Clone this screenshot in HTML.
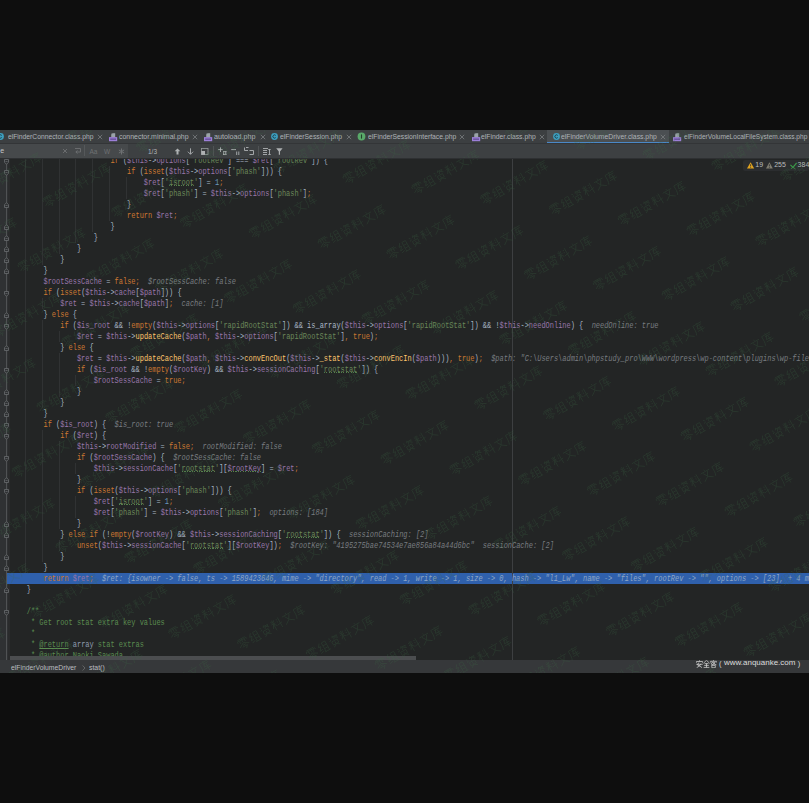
<!DOCTYPE html><html><head><meta charset="utf-8"><style>

*{margin:0;padding:0;box-sizing:border-box}
html,body{width:809px;height:803px;overflow:hidden;background:#0e0e0e}
.abs{position:absolute}
#ide{position:absolute;left:0;top:130px;width:809px;height:543px;overflow:hidden}
#tabs{position:absolute;left:0;top:130px;width:809px;height:13.5px;background:#3c3f41}
#search{position:absolute;left:0;top:143.5px;width:809px;height:14.5px;background:#3c3f41}
#editor{position:absolute;left:0;top:158px;width:809px;height:502px;background:#232525;overflow:hidden}
#gutter{position:absolute;left:0;top:0;width:7.5px;height:502px;background:#2f3133}
#gutter2{position:absolute;left:7.5px;top:0;width:2.5px;height:502px;background:#2a2b2c}
#foldline{position:absolute;left:6px;top:0;width:1px;height:502px;background:#505254}
.ln{position:absolute;left:9.7px;white-space:pre;font-family:"Liberation Mono",monospace;font-size:8.2px;line-height:11px;height:11px;color:#a9b7c6;transform:scaleX(0.85122);transform-origin:0 0}
.typo{background:repeating-linear-gradient(90deg,#55804c 0 1px,transparent 1px 2px) 0 6.9px/100% 1px no-repeat}
.hint{color:#787c80;font-style:italic}
.doc{color:#5b8c50;font-style:normal}
#hscroll{position:absolute;left:10px;top:656px;width:799px;height:4px;background:#232525}
#hthumb{position:absolute;left:10px;top:656px;width:406px;height:4px;background:#4b4d4f}
#crumb{position:absolute;left:0;top:660px;width:809px;height:13px;background:#36383a}
.g{position:absolute;width:1px;background:#303233}

</style></head><body>
<div style="position:absolute;left:0;top:130px;width:809px;height:13px;background:#3c3f41"></div>
<div style="position:absolute;left:547px;top:130px;width:122px;height:13px;background:#4b4f52"></div>
<div style="position:absolute;left:547px;top:141.5px;width:122px;height:2px;background:#4a88c7"></div>
<svg style="position:absolute;left:-4.2px;top:132.2px" width="9" height="9" viewBox="0 0 9 9"><circle cx="4.5" cy="4.5" r="3.4" fill="#3d9fbf"/><path d="M5.7 3.4 A1.6 1.6 0 1 0 5.7 5.6" stroke="#1d3b47" stroke-width="1" fill="none"/></svg>
<div style="position:absolute;left:7.5px;top:132.86px;white-space:pre;font-family:'Liberation Sans',sans-serif;font-size:7px;line-height:7.819px;color:#aeb3b7;font-weight:normal;transform:scaleX(0.9626);transform-origin:0 0;">elFinderConnector.class.php</div>
<svg style="position:absolute;left:96.5px;top:133.8px" width="6" height="6" viewBox="0 0 6 6"><path d="M0.8 0.8 L5.2 5.2 M5.2 0.8 L0.8 5.2" stroke="#7a7d80" stroke-width="0.8"/></svg>
<svg style="position:absolute;left:108.9px;top:132.8px" width="9" height="9" viewBox="0 0 9 9"><path d="M2.2 0.2 H6.2 V4.2 H2.2 Z" fill="#9aa3a8"/><path d="M2.2 0.2 L3.6 0.2 L2.2 1.6 Z" fill="#3c3f41"/><rect x="0" y="4.1" width="8.2" height="4.1" fill="#9c7fd8"/><rect x="1.2" y="5.4" width="5.8" height="1.6" fill="#6d55a0"/></svg>
<div style="position:absolute;left:118.60000000000001px;top:132.86px;white-space:pre;font-family:'Liberation Sans',sans-serif;font-size:7px;line-height:7.819px;color:#aeb3b7;font-weight:normal;transform:scaleX(0.9937);transform-origin:0 0;">connector.minimal.php</div>
<svg style="position:absolute;left:191.5px;top:133.8px" width="6" height="6" viewBox="0 0 6 6"><path d="M0.8 0.8 L5.2 5.2 M5.2 0.8 L0.8 5.2" stroke="#7a7d80" stroke-width="0.8"/></svg>
<svg style="position:absolute;left:204px;top:132.8px" width="9" height="9" viewBox="0 0 9 9"><path d="M2.2 0.2 H6.2 V4.2 H2.2 Z" fill="#9aa3a8"/><path d="M2.2 0.2 L3.6 0.2 L2.2 1.6 Z" fill="#3c3f41"/><rect x="0" y="4.1" width="8.2" height="4.1" fill="#9c7fd8"/><rect x="1.2" y="5.4" width="5.8" height="1.6" fill="#6d55a0"/></svg>
<div style="position:absolute;left:213.7px;top:132.86px;white-space:pre;font-family:'Liberation Sans',sans-serif;font-size:7px;line-height:7.819px;color:#aeb3b7;font-weight:normal;transform:scaleX(1.0277);transform-origin:0 0;">autoload.php</div>
<svg style="position:absolute;left:259.5px;top:133.8px" width="6" height="6" viewBox="0 0 6 6"><path d="M0.8 0.8 L5.2 5.2 M5.2 0.8 L0.8 5.2" stroke="#7a7d80" stroke-width="0.8"/></svg>
<svg style="position:absolute;left:270.2px;top:132.2px" width="9" height="9" viewBox="0 0 9 9"><circle cx="4.5" cy="4.5" r="3.4" fill="#3d9fbf"/><path d="M5.7 3.4 A1.6 1.6 0 1 0 5.7 5.6" stroke="#1d3b47" stroke-width="1" fill="none"/></svg>
<div style="position:absolute;left:280.2px;top:132.86px;white-space:pre;font-family:'Liberation Sans',sans-serif;font-size:7px;line-height:7.819px;color:#aeb3b7;font-weight:normal;transform:scaleX(0.9715);transform-origin:0 0;">elFinderSession.php</div>
<svg style="position:absolute;left:345.5px;top:133.8px" width="6" height="6" viewBox="0 0 6 6"><path d="M0.8 0.8 L5.2 5.2 M5.2 0.8 L0.8 5.2" stroke="#7a7d80" stroke-width="0.8"/></svg>
<svg style="position:absolute;left:357.2px;top:132.2px" width="9" height="9" viewBox="0 0 9 9"><circle cx="4.5" cy="4.5" r="3.9" fill="#59a869"/><path d="M4.5 2.4 V6.6" stroke="#23402a" stroke-width="1.1"/></svg>
<div style="position:absolute;left:367.7px;top:132.86px;white-space:pre;font-family:'Liberation Sans',sans-serif;font-size:7px;line-height:7.819px;color:#aeb3b7;font-weight:normal;transform:scaleX(0.9687);transform-origin:0 0;">elFinderSessionInterface.php</div>
<svg style="position:absolute;left:458.5px;top:133.8px" width="6" height="6" viewBox="0 0 6 6"><path d="M0.8 0.8 L5.2 5.2 M5.2 0.8 L0.8 5.2" stroke="#7a7d80" stroke-width="0.8"/></svg>
<svg style="position:absolute;left:471.8px;top:132.8px" width="9" height="9" viewBox="0 0 9 9"><path d="M2.2 0.2 H6.2 V4.2 H2.2 Z" fill="#9aa3a8"/><path d="M2.2 0.2 L3.6 0.2 L2.2 1.6 Z" fill="#3c3f41"/><rect x="0" y="4.1" width="8.2" height="4.1" fill="#9c7fd8"/><rect x="1.2" y="5.4" width="5.8" height="1.6" fill="#6d55a0"/></svg>
<div style="position:absolute;left:481.3px;top:132.86px;white-space:pre;font-family:'Liberation Sans',sans-serif;font-size:7px;line-height:7.819px;color:#aeb3b7;font-weight:normal;transform:scaleX(0.9695);transform-origin:0 0;">elFinder.class.php</div>
<svg style="position:absolute;left:538.5px;top:133.8px" width="6" height="6" viewBox="0 0 6 6"><path d="M0.8 0.8 L5.2 5.2 M5.2 0.8 L0.8 5.2" stroke="#7a7d80" stroke-width="0.8"/></svg>
<svg style="position:absolute;left:551.6px;top:132.2px" width="9" height="9" viewBox="0 0 9 9"><circle cx="4.5" cy="4.5" r="3.4" fill="#3d9fbf"/><path d="M5.7 3.4 A1.6 1.6 0 1 0 5.7 5.6" stroke="#1d3b47" stroke-width="1" fill="none"/></svg>
<div style="position:absolute;left:561.4000000000001px;top:132.86px;white-space:pre;font-family:'Liberation Sans',sans-serif;font-size:7px;line-height:7.819px;color:#aeb3b7;font-weight:normal;transform:scaleX(0.9723);transform-origin:0 0;">elFinderVolumeDriver.class.php</div>
<svg style="position:absolute;left:659.5px;top:133.8px" width="6" height="6" viewBox="0 0 6 6"><path d="M0.8 0.8 L5.2 5.2 M5.2 0.8 L0.8 5.2" stroke="#7a7d80" stroke-width="0.8"/></svg>
<svg style="position:absolute;left:673px;top:132.8px" width="9" height="9" viewBox="0 0 9 9"><path d="M2.2 0.2 H6.2 V4.2 H2.2 Z" fill="#9aa3a8"/><path d="M2.2 0.2 L3.6 0.2 L2.2 1.6 Z" fill="#3c3f41"/><rect x="0" y="4.1" width="8.2" height="4.1" fill="#9c7fd8"/><rect x="1.2" y="5.4" width="5.8" height="1.6" fill="#6d55a0"/></svg>
<div style="position:absolute;left:683.7px;top:132.86px;white-space:pre;font-family:'Liberation Sans',sans-serif;font-size:7px;line-height:7.819px;color:#aeb3b7;font-weight:normal;transform:scaleX(0.9376);transform-origin:0 0;">elFinderVolumeLocalFileSystem.class.php</div>
<div style="position:absolute;left:0;top:143px;width:809px;height:15px;background:#3d4042"></div>
<div style="position:absolute;left:0;top:157.5px;width:809px;height:1px;background:#2e3032;z-index:1"></div>
<div style="position:absolute;left:0;top:143px;width:128px;height:15px;background:#46494b"></div>
<div style="position:absolute;left:0;top:142.7px;width:809px;height:1px;background:#333537"></div>
<div style="position:absolute;left:84px;top:145px;width:1px;height:11px;background:#55585a"></div>
<div style="position:absolute;left:0.3px;top:146.86px;white-space:pre;font-family:'Liberation Sans',sans-serif;font-size:7px;line-height:7.819px;color:#c4c6c8;font-weight:normal;">e</div>
<svg style="position:absolute;left:62px;top:147.5px" width="6" height="6"><path d="M1 1 L5 5 M5 1 L1 5" stroke="#6e7173" stroke-width="0.9"/></svg>
<svg style="position:absolute;left:74px;top:147px" width="8" height="7"><path d="M1 1.5 H6.5 V5 H2 M3.5 3.5 L1.8 5 L3.5 6.5" stroke="#6e7173" stroke-width="0.9" fill="none"/></svg>
<div style="position:absolute;left:89.5px;top:148.32px;white-space:pre;font-family:'Liberation Sans',sans-serif;font-size:6.5px;line-height:7.261px;color:#6e7173;font-weight:normal;">Aa</div>
<div style="position:absolute;left:104px;top:148.32px;white-space:pre;font-family:'Liberation Sans',sans-serif;font-size:6.5px;line-height:7.261px;color:#6e7173;font-weight:normal;">W</div>
<svg style="position:absolute;left:117.5px;top:147.5px" width="7" height="7"><path d="M3.5 0.5 V6.5 M0.9 2 L6.1 5 M6.1 2 L0.9 5" stroke="#6e7173" stroke-width="1"/></svg>
<div style="position:absolute;left:148px;top:148.12px;white-space:pre;font-family:'Liberation Sans',sans-serif;font-size:6.5px;line-height:7.261px;color:#b0b3b5;font-weight:normal;">1/3</div>
<svg style="position:absolute;left:174px;top:147.5px" width="7" height="7"><path d="M3.5 0.5 L6.3 3.3 H4.5 V6.5 H2.5 V3.3 H0.7 Z" fill="#aeb1b3"/></svg>
<svg style="position:absolute;left:187px;top:147.5px" width="7" height="7"><path d="M3.5 0.3 V6.2 M0.9 3.7 L3.5 6.3 L6.1 3.7" stroke="#aeb1b3" stroke-width="0.9" fill="none"/></svg>
<svg style="position:absolute;left:200.5px;top:147.5px" width="8" height="7"><rect x="0.5" y="0.5" width="6.5" height="6" stroke="#aeb1b3" stroke-width="0.8" fill="none" opacity="0.8"/><rect x="0.3" y="3" width="3.7" height="3.8" fill="#aeb1b3"/></svg>
<div style="position:absolute;left:212.5px;top:145.5px;width:1px;height:10px;background:#505355"></div>
<svg style="position:absolute;left:218px;top:147px" width="9" height="8"><path d="M2.5 0.3 V5 M0.2 2.6 H4.8 M5 4.5 H8.5 M5.7 4.5 V8 M7.8 4.5 V8 M5 7.6 H8.5" stroke="#aeb1b3" stroke-width="0.9" fill="none"/></svg>
<svg style="position:absolute;left:231px;top:147px" width="9" height="8"><path d="M0.2 2.6 H5 M5.7 4.5 V8 M7.8 4.5 V8" stroke="#aeb1b3" stroke-width="0.9" fill="none"/></svg>
<svg style="position:absolute;left:243.5px;top:147px" width="10" height="8"><path d="M0.5 0.5 V3.5 H4 M4.5 0.5 H2 M5.5 3.5 H9.5 V7.5 H5.5" stroke="#aeb1b3" stroke-width="0.9" fill="none"/></svg>
<div style="position:absolute;left:257.8px;top:145.5px;width:1px;height:10px;background:#505355"></div>
<svg style="position:absolute;left:262.5px;top:147.5px" width="8" height="7"><path d="M0 0.5 H5 M0 2.5 H4 M0 4.5 H4 M0 6.5 H4 M6.5 1.5 V6.5 M5.3 1.5 H7.7 M5.3 6.5 H7.7" stroke="#aeb1b3" stroke-width="0.9" fill="none"/></svg>
<svg style="position:absolute;left:276px;top:147.5px" width="7" height="7"><path d="M0.2 0.3 H6.6 L4 3.4 V6.8 H2.8 V3.4 Z" fill="#aeb1b3"/></svg>
<div id="editor"><div id="gutter"></div><div id="gutter2"></div><div id="foldline"></div>
<div class="g" style="left:25px;top:0.0px;height:425.5px"></div>
<div class="g" style="left:42px;top:0.0px;height:106.5px"></div>
<div class="g" style="left:59px;top:0.0px;height:95.5px"></div>
<div class="g" style="left:75px;top:0.0px;height:84.5px"></div>
<div class="g" style="left:92px;top:0.0px;height:73.5px"></div>
<div class="g" style="left:109px;top:7.5px;height:55.0px"></div>
<div class="g" style="left:126px;top:18.5px;height:22.0px"></div>
<div class="g" style="left:42px;top:139.5px;height:11.0px"></div>
<div class="g" style="left:42px;top:161.5px;height:88.0px"></div>
<div class="g" style="left:59px;top:172.5px;height:11.0px"></div>
<div class="g" style="left:59px;top:194.5px;height:44.0px"></div>
<div class="g" style="left:75px;top:216.5px;height:11.0px"></div>
<div class="g" style="left:42px;top:271.5px;height:132.0px"></div>
<div class="g" style="left:59px;top:282.5px;height:88.0px"></div>
<div class="g" style="left:75px;top:304.5px;height:11.0px"></div>
<div class="g" style="left:75px;top:337.5px;height:22.0px"></div>
<div class="g" style="left:59px;top:381.5px;height:11.0px"></div>
<div class="abs" style="left:7px;top:414.5px;width:802px;height:11px;background:#2f60ac"></div>
<div class="abs" style="left:512px;top:0;width:1px;height:502px;background:#3d3f41"></div>
<svg style="position:absolute;left:4px;top:0.7px" width="5" height="6" viewBox="0 0 5 6"><path d="M0.5 0.5 H4.5 V3.3 L2.5 5.3 L0.5 3.3 Z" fill="#2f3133" stroke="#6a6d70" stroke-width="0.8"/><path d="M1.5 2.5 H3.5" stroke="#6a6d70" stroke-width="0.7"/></svg>
<svg style="position:absolute;left:4px;top:11.7px" width="5" height="6" viewBox="0 0 5 6"><path d="M0.5 0.5 H4.5 V3.3 L2.5 5.3 L0.5 3.3 Z" fill="#2f3133" stroke="#6a6d70" stroke-width="0.8"/><path d="M1.5 2.5 H3.5" stroke="#6a6d70" stroke-width="0.7"/></svg>
<svg style="position:absolute;left:4px;top:132.7px" width="5" height="6" viewBox="0 0 5 6"><path d="M0.5 0.5 H4.5 V3.3 L2.5 5.3 L0.5 3.3 Z" fill="#2f3133" stroke="#6a6d70" stroke-width="0.8"/><path d="M1.5 2.5 H3.5" stroke="#6a6d70" stroke-width="0.7"/></svg>
<svg style="position:absolute;left:4px;top:165.7px" width="5" height="6" viewBox="0 0 5 6"><path d="M0.5 0.5 H4.5 V3.3 L2.5 5.3 L0.5 3.3 Z" fill="#2f3133" stroke="#6a6d70" stroke-width="0.8"/><path d="M1.5 2.5 H3.5" stroke="#6a6d70" stroke-width="0.7"/></svg>
<svg style="position:absolute;left:4px;top:209.7px" width="5" height="6" viewBox="0 0 5 6"><path d="M0.5 0.5 H4.5 V3.3 L2.5 5.3 L0.5 3.3 Z" fill="#2f3133" stroke="#6a6d70" stroke-width="0.8"/><path d="M1.5 2.5 H3.5" stroke="#6a6d70" stroke-width="0.7"/></svg>
<svg style="position:absolute;left:4px;top:264.7px" width="5" height="6" viewBox="0 0 5 6"><path d="M0.5 0.5 H4.5 V3.3 L2.5 5.3 L0.5 3.3 Z" fill="#2f3133" stroke="#6a6d70" stroke-width="0.8"/><path d="M1.5 2.5 H3.5" stroke="#6a6d70" stroke-width="0.7"/></svg>
<svg style="position:absolute;left:4px;top:275.7px" width="5" height="6" viewBox="0 0 5 6"><path d="M0.5 0.5 H4.5 V3.3 L2.5 5.3 L0.5 3.3 Z" fill="#2f3133" stroke="#6a6d70" stroke-width="0.8"/><path d="M1.5 2.5 H3.5" stroke="#6a6d70" stroke-width="0.7"/></svg>
<svg style="position:absolute;left:4px;top:297.7px" width="5" height="6" viewBox="0 0 5 6"><path d="M0.5 0.5 H4.5 V3.3 L2.5 5.3 L0.5 3.3 Z" fill="#2f3133" stroke="#6a6d70" stroke-width="0.8"/><path d="M1.5 2.5 H3.5" stroke="#6a6d70" stroke-width="0.7"/></svg>
<svg style="position:absolute;left:4px;top:330.7px" width="5" height="6" viewBox="0 0 5 6"><path d="M0.5 0.5 H4.5 V3.3 L2.5 5.3 L0.5 3.3 Z" fill="#2f3133" stroke="#6a6d70" stroke-width="0.8"/><path d="M1.5 2.5 H3.5" stroke="#6a6d70" stroke-width="0.7"/></svg>
<svg style="position:absolute;left:4px;top:451.7px" width="5" height="6" viewBox="0 0 5 6"><path d="M0.5 0.5 H4.5 V3.3 L2.5 5.3 L0.5 3.3 Z" fill="#2f3133" stroke="#6a6d70" stroke-width="0.8"/><path d="M1.5 2.5 H3.5" stroke="#6a6d70" stroke-width="0.7"/></svg>
<svg style="position:absolute;left:4px;top:43.5px" width="5" height="6" viewBox="0 0 5 6"><path d="M0.5 5.5 H4.5 V2.7 L2.5 0.7 L0.5 2.7 Z" fill="#2f3133" stroke="#6a6d70" stroke-width="0.8"/><path d="M1.5 3.5 H3.5" stroke="#6a6d70" stroke-width="0.7"/></svg>
<svg style="position:absolute;left:4px;top:65.5px" width="5" height="6" viewBox="0 0 5 6"><path d="M0.5 5.5 H4.5 V2.7 L2.5 0.7 L0.5 2.7 Z" fill="#2f3133" stroke="#6a6d70" stroke-width="0.8"/><path d="M1.5 3.5 H3.5" stroke="#6a6d70" stroke-width="0.7"/></svg>
<svg style="position:absolute;left:4px;top:76.5px" width="5" height="6" viewBox="0 0 5 6"><path d="M0.5 5.5 H4.5 V2.7 L2.5 0.7 L0.5 2.7 Z" fill="#2f3133" stroke="#6a6d70" stroke-width="0.8"/><path d="M1.5 3.5 H3.5" stroke="#6a6d70" stroke-width="0.7"/></svg>
<svg style="position:absolute;left:4px;top:87.5px" width="5" height="6" viewBox="0 0 5 6"><path d="M0.5 5.5 H4.5 V2.7 L2.5 0.7 L0.5 2.7 Z" fill="#2f3133" stroke="#6a6d70" stroke-width="0.8"/><path d="M1.5 3.5 H3.5" stroke="#6a6d70" stroke-width="0.7"/></svg>
<svg style="position:absolute;left:4px;top:98.5px" width="5" height="6" viewBox="0 0 5 6"><path d="M0.5 5.5 H4.5 V2.7 L2.5 0.7 L0.5 2.7 Z" fill="#2f3133" stroke="#6a6d70" stroke-width="0.8"/><path d="M1.5 3.5 H3.5" stroke="#6a6d70" stroke-width="0.7"/></svg>
<svg style="position:absolute;left:4px;top:109.5px" width="5" height="6" viewBox="0 0 5 6"><path d="M0.5 5.5 H4.5 V2.7 L2.5 0.7 L0.5 2.7 Z" fill="#2f3133" stroke="#6a6d70" stroke-width="0.8"/><path d="M1.5 3.5 H3.5" stroke="#6a6d70" stroke-width="0.7"/></svg>
<svg style="position:absolute;left:4px;top:153.5px" width="5" height="6" viewBox="0 0 5 6"><path d="M0.5 5.5 H4.5 V2.7 L2.5 0.7 L0.5 2.7 Z" fill="#2f3133" stroke="#6a6d70" stroke-width="0.8"/><path d="M1.5 3.5 H3.5" stroke="#6a6d70" stroke-width="0.7"/></svg>
<svg style="position:absolute;left:4px;top:186.5px" width="5" height="6" viewBox="0 0 5 6"><path d="M0.5 5.5 H4.5 V2.7 L2.5 0.7 L0.5 2.7 Z" fill="#2f3133" stroke="#6a6d70" stroke-width="0.8"/><path d="M1.5 3.5 H3.5" stroke="#6a6d70" stroke-width="0.7"/></svg>
<svg style="position:absolute;left:4px;top:230.5px" width="5" height="6" viewBox="0 0 5 6"><path d="M0.5 5.5 H4.5 V2.7 L2.5 0.7 L0.5 2.7 Z" fill="#2f3133" stroke="#6a6d70" stroke-width="0.8"/><path d="M1.5 3.5 H3.5" stroke="#6a6d70" stroke-width="0.7"/></svg>
<svg style="position:absolute;left:4px;top:241.5px" width="5" height="6" viewBox="0 0 5 6"><path d="M0.5 5.5 H4.5 V2.7 L2.5 0.7 L0.5 2.7 Z" fill="#2f3133" stroke="#6a6d70" stroke-width="0.8"/><path d="M1.5 3.5 H3.5" stroke="#6a6d70" stroke-width="0.7"/></svg>
<svg style="position:absolute;left:4px;top:252.5px" width="5" height="6" viewBox="0 0 5 6"><path d="M0.5 5.5 H4.5 V2.7 L2.5 0.7 L0.5 2.7 Z" fill="#2f3133" stroke="#6a6d70" stroke-width="0.8"/><path d="M1.5 3.5 H3.5" stroke="#6a6d70" stroke-width="0.7"/></svg>
<svg style="position:absolute;left:4px;top:318.5px" width="5" height="6" viewBox="0 0 5 6"><path d="M0.5 5.5 H4.5 V2.7 L2.5 0.7 L0.5 2.7 Z" fill="#2f3133" stroke="#6a6d70" stroke-width="0.8"/><path d="M1.5 3.5 H3.5" stroke="#6a6d70" stroke-width="0.7"/></svg>
<svg style="position:absolute;left:4px;top:362.5px" width="5" height="6" viewBox="0 0 5 6"><path d="M0.5 5.5 H4.5 V2.7 L2.5 0.7 L0.5 2.7 Z" fill="#2f3133" stroke="#6a6d70" stroke-width="0.8"/><path d="M1.5 3.5 H3.5" stroke="#6a6d70" stroke-width="0.7"/></svg>
<svg style="position:absolute;left:4px;top:373.5px" width="5" height="6" viewBox="0 0 5 6"><path d="M0.5 5.5 H4.5 V2.7 L2.5 0.7 L0.5 2.7 Z" fill="#2f3133" stroke="#6a6d70" stroke-width="0.8"/><path d="M1.5 3.5 H3.5" stroke="#6a6d70" stroke-width="0.7"/></svg>
<svg style="position:absolute;left:4px;top:395.5px" width="5" height="6" viewBox="0 0 5 6"><path d="M0.5 5.5 H4.5 V2.7 L2.5 0.7 L0.5 2.7 Z" fill="#2f3133" stroke="#6a6d70" stroke-width="0.8"/><path d="M1.5 3.5 H3.5" stroke="#6a6d70" stroke-width="0.7"/></svg>
<svg style="position:absolute;left:4px;top:406.5px" width="5" height="6" viewBox="0 0 5 6"><path d="M0.5 5.5 H4.5 V2.7 L2.5 0.7 L0.5 2.7 Z" fill="#2f3133" stroke="#6a6d70" stroke-width="0.8"/><path d="M1.5 3.5 H3.5" stroke="#6a6d70" stroke-width="0.7"/></svg>
<svg style="position:absolute;left:4px;top:428.5px" width="5" height="6" viewBox="0 0 5 6"><path d="M0.5 5.5 H4.5 V2.7 L2.5 0.7 L0.5 2.7 Z" fill="#2f3133" stroke="#6a6d70" stroke-width="0.8"/><path d="M1.5 3.5 H3.5" stroke="#6a6d70" stroke-width="0.7"/></svg>
</div>
<div style="position:absolute;left:0;top:158px;width:809px;height:498px;overflow:hidden"><div style="position:absolute;left:0;top:-158px">
<div class="ln" style="top:155.2px">                        <span style="color:#cc7832">if</span> <span style="color:#a9b7c6">(</span><span style="color:#9876aa">$this</span><span style="color:#a9b7c6">-&gt;</span><span style="color:#9876aa">options</span><span style="color:#a9b7c6">[</span><span style="color:#6a8759">&#x27;rootRev&#x27;</span><span style="color:#a9b7c6">]</span> <span style="color:#a9b7c6">=</span><span style="color:#a9b7c6">=</span><span style="color:#a9b7c6">=</span> <span style="color:#9876aa">$ret</span><span style="color:#a9b7c6">[</span><span style="color:#6a8759">&#x27;rootRev&#x27;</span><span style="color:#a9b7c6">]</span><span style="color:#a9b7c6">)</span> <span style="color:#a9b7c6">{</span></div>
<div class="ln" style="top:166.2px">                            <span style="color:#cc7832">if</span> <span style="color:#a9b7c6">(</span><span style="color:#cc7832">isset</span><span style="color:#a9b7c6">(</span><span style="color:#9876aa">$this</span><span style="color:#a9b7c6">-&gt;</span><span style="color:#9876aa">options</span><span style="color:#a9b7c6">[</span><span style="color:#6a8759">&#x27;phash&#x27;</span><span style="color:#a9b7c6">]</span><span style="color:#a9b7c6">)</span><span style="color:#a9b7c6">)</span> <span style="color:#a9b7c6">{</span></div>
<div class="ln" style="top:177.2px">                                <span style="color:#9876aa">$ret</span><span style="color:#a9b7c6">[</span><span style="color:#6a8759">'<span class="typo">isroot</span>'</span><span style="color:#a9b7c6">]</span> <span style="color:#a9b7c6">=</span> <span style="color:#6897bb">1</span><span style="color:#cc7832">;</span></div>
<div class="ln" style="top:188.2px">                                <span style="color:#9876aa">$ret</span><span style="color:#a9b7c6">[</span><span style="color:#6a8759">&#x27;phash&#x27;</span><span style="color:#a9b7c6">]</span> <span style="color:#a9b7c6">=</span> <span style="color:#9876aa">$this</span><span style="color:#a9b7c6">-&gt;</span><span style="color:#9876aa">options</span><span style="color:#a9b7c6">[</span><span style="color:#6a8759">&#x27;phash&#x27;</span><span style="color:#a9b7c6">]</span><span style="color:#cc7832">;</span></div>
<div class="ln" style="top:199.2px">                            <span style="color:#a9b7c6">}</span></div>
<div class="ln" style="top:210.2px">                            <span style="color:#cc7832">return</span> <span style="color:#9876aa">$ret</span><span style="color:#cc7832">;</span></div>
<div class="ln" style="top:221.2px">                        <span style="color:#a9b7c6">}</span></div>
<div class="ln" style="top:232.2px">                    <span style="color:#a9b7c6">}</span></div>
<div class="ln" style="top:243.2px">                <span style="color:#a9b7c6">}</span></div>
<div class="ln" style="top:254.2px">            <span style="color:#a9b7c6">}</span></div>
<div class="ln" style="top:265.2px">        <span style="color:#a9b7c6">}</span></div>
<div class="ln" style="top:276.2px">        <span style="color:#9876aa">$rootSessCache</span> <span style="color:#a9b7c6">=</span> <span style="color:#cc7832">false</span><span style="color:#cc7832">;</span>  <span class="hint">$rootSessCache: false</span></div>
<div class="ln" style="top:287.2px">        <span style="color:#cc7832">if</span> <span style="color:#a9b7c6">(</span><span style="color:#cc7832">isset</span><span style="color:#a9b7c6">(</span><span style="color:#9876aa">$this</span><span style="color:#a9b7c6">-&gt;</span><span style="color:#9876aa">cache</span><span style="color:#a9b7c6">[</span><span style="color:#9876aa">$path</span><span style="color:#a9b7c6">]</span><span style="color:#a9b7c6">)</span><span style="color:#a9b7c6">)</span> <span style="color:#a9b7c6">{</span></div>
<div class="ln" style="top:298.2px">            <span style="color:#9876aa">$ret</span> <span style="color:#a9b7c6">=</span> <span style="color:#9876aa">$this</span><span style="color:#a9b7c6">-&gt;</span><span style="color:#9876aa">cache</span><span style="color:#a9b7c6">[</span><span style="color:#9876aa">$path</span><span style="color:#a9b7c6">]</span><span style="color:#cc7832">;</span>  <span class="hint">cache: [1]</span></div>
<div class="ln" style="top:309.2px">        <span style="color:#a9b7c6">}</span> <span style="color:#cc7832">else</span> <span style="color:#a9b7c6">{</span></div>
<div class="ln" style="top:320.2px">            <span style="color:#cc7832">if</span> <span style="color:#a9b7c6">(</span><span style="color:#9876aa">$is_root</span> <span style="color:#a9b7c6">&amp;</span><span style="color:#a9b7c6">&amp;</span> <span style="color:#a9b7c6">!</span><span style="color:#cc7832">empty</span><span style="color:#a9b7c6">(</span><span style="color:#9876aa">$this</span><span style="color:#a9b7c6">-&gt;</span><span style="color:#9876aa">options</span><span style="color:#a9b7c6">[</span><span style="color:#6a8759">&#x27;rapidRootStat&#x27;</span><span style="color:#a9b7c6">]</span><span style="color:#a9b7c6">)</span> <span style="color:#a9b7c6">&amp;</span><span style="color:#a9b7c6">&amp;</span> <span style="color:#a9b7c6">is_array</span><span style="color:#a9b7c6">(</span><span style="color:#9876aa">$this</span><span style="color:#a9b7c6">-&gt;</span><span style="color:#9876aa">options</span><span style="color:#a9b7c6">[</span><span style="color:#6a8759">&#x27;rapidRootStat&#x27;</span><span style="color:#a9b7c6">]</span><span style="color:#a9b7c6">)</span> <span style="color:#a9b7c6">&amp;</span><span style="color:#a9b7c6">&amp;</span> <span style="color:#a9b7c6">!</span><span style="color:#9876aa">$this</span><span style="color:#a9b7c6">-&gt;</span><span style="color:#9876aa">needOnline</span><span style="color:#a9b7c6">)</span> <span style="color:#a9b7c6">{</span>  <span class="hint">needOnline: true</span></div>
<div class="ln" style="top:331.2px">                <span style="color:#9876aa">$ret</span> <span style="color:#a9b7c6">=</span> <span style="color:#9876aa">$this</span><span style="color:#a9b7c6">-&gt;</span><span style="color:#ffc66d">updateCache</span><span style="color:#a9b7c6">(</span><span style="color:#9876aa">$path</span><span style="color:#cc7832">,</span> <span style="color:#9876aa">$this</span><span style="color:#a9b7c6">-&gt;</span><span style="color:#9876aa">options</span><span style="color:#a9b7c6">[</span><span style="color:#6a8759">&#x27;rapidRootStat&#x27;</span><span style="color:#a9b7c6">]</span><span style="color:#cc7832">,</span> <span style="color:#cc7832">true</span><span style="color:#a9b7c6">)</span><span style="color:#cc7832">;</span></div>
<div class="ln" style="top:342.2px">            <span style="color:#a9b7c6">}</span> <span style="color:#cc7832">else</span> <span style="color:#a9b7c6">{</span></div>
<div class="ln" style="top:353.2px">                <span style="color:#9876aa">$ret</span> <span style="color:#a9b7c6">=</span> <span style="color:#9876aa">$this</span><span style="color:#a9b7c6">-&gt;</span><span style="color:#ffc66d">updateCache</span><span style="color:#a9b7c6">(</span><span style="color:#9876aa">$path</span><span style="color:#cc7832">,</span> <span style="color:#9876aa">$this</span><span style="color:#a9b7c6">-&gt;</span><span style="color:#ffc66d">convEncOut</span><span style="color:#a9b7c6">(</span><span style="color:#9876aa">$this</span><span style="color:#a9b7c6">-&gt;</span><span style="color:#ffc66d">_stat</span><span style="color:#a9b7c6">(</span><span style="color:#9876aa">$this</span><span style="color:#a9b7c6">-&gt;</span><span style="color:#ffc66d">convEncIn</span><span style="color:#a9b7c6">(</span><span style="color:#9876aa">$path</span><span style="color:#a9b7c6">)</span><span style="color:#a9b7c6">)</span><span style="color:#a9b7c6">)</span><span style="color:#cc7832">,</span> <span style="color:#cc7832">true</span><span style="color:#a9b7c6">)</span><span style="color:#cc7832">;</span>  <span class="hint">$path: &quot;C:\Users\admin\phpstudy_pro\WWW\wordpress\wp-content\plugins\wp-file-manager\lib\files&quot;</span></div>
<div class="ln" style="top:364.2px">                <span style="color:#cc7832">if</span> <span style="color:#a9b7c6">(</span><span style="color:#9876aa">$is_root</span> <span style="color:#a9b7c6">&amp;</span><span style="color:#a9b7c6">&amp;</span> <span style="color:#a9b7c6">!</span><span style="color:#cc7832">empty</span><span style="color:#a9b7c6">(</span><span style="color:#9876aa">$rootKey</span><span style="color:#a9b7c6">)</span> <span style="color:#a9b7c6">&amp;</span><span style="color:#a9b7c6">&amp;</span> <span style="color:#9876aa">$this</span><span style="color:#a9b7c6">-&gt;</span><span style="color:#9876aa">sessionCaching</span><span style="color:#a9b7c6">[</span><span style="color:#6a8759">'<span class="typo">rootstat</span>'</span><span style="color:#a9b7c6">]</span><span style="color:#a9b7c6">)</span> <span style="color:#a9b7c6">{</span></div>
<div class="ln" style="top:375.2px">                    <span style="color:#9876aa">$rootSessCache</span> <span style="color:#a9b7c6">=</span> <span style="color:#cc7832">true</span><span style="color:#cc7832">;</span></div>
<div class="ln" style="top:386.2px">                <span style="color:#a9b7c6">}</span></div>
<div class="ln" style="top:397.2px">            <span style="color:#a9b7c6">}</span></div>
<div class="ln" style="top:408.2px">        <span style="color:#a9b7c6">}</span></div>
<div class="ln" style="top:419.2px">        <span style="color:#cc7832">if</span> <span style="color:#a9b7c6">(</span><span style="color:#9876aa">$is_root</span><span style="color:#a9b7c6">)</span> <span style="color:#a9b7c6">{</span>  <span class="hint">$is_root: true</span></div>
<div class="ln" style="top:430.2px">            <span style="color:#cc7832">if</span> <span style="color:#a9b7c6">(</span><span style="color:#9876aa">$ret</span><span style="color:#a9b7c6">)</span> <span style="color:#a9b7c6">{</span></div>
<div class="ln" style="top:441.2px">                <span style="color:#9876aa">$this</span><span style="color:#a9b7c6">-&gt;</span><span style="color:#9876aa">rootModified</span> <span style="color:#a9b7c6">=</span> <span style="color:#cc7832">false</span><span style="color:#cc7832">;</span>  <span class="hint">rootModified: false</span></div>
<div class="ln" style="top:452.2px">                <span style="color:#cc7832">if</span> <span style="color:#a9b7c6">(</span><span style="color:#9876aa">$rootSessCache</span><span style="color:#a9b7c6">)</span> <span style="color:#a9b7c6">{</span>  <span class="hint">$rootSessCache: false</span></div>
<div class="ln" style="top:463.2px">                    <span style="color:#9876aa">$this</span><span style="color:#a9b7c6">-&gt;</span><span style="color:#9876aa">sessionCache</span><span style="color:#a9b7c6">[</span><span style="color:#6a8759">'<span class="typo">rootstat</span>'</span><span style="color:#a9b7c6">]</span><span style="color:#a9b7c6">[</span><span style="color:#9876aa" class="typo">$rootKey</span><span style="color:#a9b7c6">]</span> <span style="color:#a9b7c6">=</span> <span style="color:#9876aa">$ret</span><span style="color:#cc7832">;</span></div>
<div class="ln" style="top:474.2px">                <span style="color:#a9b7c6">}</span></div>
<div class="ln" style="top:485.2px">                <span style="color:#cc7832">if</span> <span style="color:#a9b7c6">(</span><span style="color:#cc7832">isset</span><span style="color:#a9b7c6">(</span><span style="color:#9876aa">$this</span><span style="color:#a9b7c6">-&gt;</span><span style="color:#9876aa">options</span><span style="color:#a9b7c6">[</span><span style="color:#6a8759">&#x27;phash&#x27;</span><span style="color:#a9b7c6">]</span><span style="color:#a9b7c6">)</span><span style="color:#a9b7c6">)</span> <span style="color:#a9b7c6">{</span></div>
<div class="ln" style="top:496.2px">                    <span style="color:#9876aa">$ret</span><span style="color:#a9b7c6">[</span><span style="color:#6a8759">'<span class="typo">isroot</span>'</span><span style="color:#a9b7c6">]</span> <span style="color:#a9b7c6">=</span> <span style="color:#6897bb">1</span><span style="color:#cc7832">;</span></div>
<div class="ln" style="top:507.2px">                    <span style="color:#9876aa">$ret</span><span style="color:#a9b7c6">[</span><span style="color:#6a8759">&#x27;phash&#x27;</span><span style="color:#a9b7c6">]</span> <span style="color:#a9b7c6">=</span> <span style="color:#9876aa">$this</span><span style="color:#a9b7c6">-&gt;</span><span style="color:#9876aa">options</span><span style="color:#a9b7c6">[</span><span style="color:#6a8759">&#x27;phash&#x27;</span><span style="color:#a9b7c6">]</span><span style="color:#cc7832">;</span>  <span class="hint">options: [184]</span></div>
<div class="ln" style="top:518.2px">                <span style="color:#a9b7c6">}</span></div>
<div class="ln" style="top:529.2px">            <span style="color:#a9b7c6">}</span> <span style="color:#cc7832">else</span> <span style="color:#cc7832">if</span> <span style="color:#a9b7c6">(</span><span style="color:#a9b7c6">!</span><span style="color:#cc7832">empty</span><span style="color:#a9b7c6">(</span><span style="color:#9876aa">$rootKey</span><span style="color:#a9b7c6">)</span> <span style="color:#a9b7c6">&amp;</span><span style="color:#a9b7c6">&amp;</span> <span style="color:#9876aa">$this</span><span style="color:#a9b7c6">-&gt;</span><span style="color:#9876aa">sessionCaching</span><span style="color:#a9b7c6">[</span><span style="color:#6a8759">'<span class="typo">rootstat</span>'</span><span style="color:#a9b7c6">]</span><span style="color:#a9b7c6">)</span> <span style="color:#a9b7c6">{</span>  <span class="hint">sessionCaching: [2]</span></div>
<div class="ln" style="top:540.2px">                <span style="color:#cc7832">unset</span><span style="color:#a9b7c6">(</span><span style="color:#9876aa">$this</span><span style="color:#a9b7c6">-&gt;</span><span style="color:#9876aa">sessionCache</span><span style="color:#a9b7c6">[</span><span style="color:#6a8759">'<span class="typo">rootstat</span>'</span><span style="color:#a9b7c6">]</span><span style="color:#a9b7c6">[</span><span style="color:#9876aa">$rootKey</span><span style="color:#a9b7c6">]</span><span style="color:#a9b7c6">)</span><span style="color:#cc7832">;</span>  <span class="hint">$rootKey: &quot;4195275bae74534e7ae856a84a44d6bc&quot;  sessionCache: [2]</span></div>
<div class="ln" style="top:551.2px">            <span style="color:#a9b7c6">}</span></div>
<div class="ln" style="top:562.2px">        <span style="color:#a9b7c6">}</span></div>
<div class="ln" style="top:573.2px">        <span style="color:#cc7832">return</span> <span style="color:#9876aa">$ret</span><span style="color:#cc7832">;</span>  <span class="hint" style="color:#8ea6c6">$ret: {isowner -&gt; false, ts -&gt; 1589423646, mime -&gt; &quot;directory&quot;, read -&gt; 1, write -&gt; 1, size -&gt; 0, hash -&gt; &quot;l1_Lw&quot;, name -&gt; &quot;files&quot;, rootRev -&gt; &quot;&quot;, options -&gt; [23], + 4 more}</span></div>
<div class="ln" style="top:584.2px">    <span style="color:#a9b7c6">}</span></div>
<div class="ln" style="top:595.2px"></div>
<div class="ln doc" style="top:606.2px">    /**</div>
<div class="ln doc" style="top:617.2px">     * Get root stat extra key values</div>
<div class="ln doc" style="top:628.2px">     *</div>
<div class="ln doc" style="top:639.2px">     * <span style="text-decoration:underline">@return</span> <span style="color:#8e9cb0;font-style:normal">array</span> stat extras</div>
<div class="ln doc" style="top:650.2px">     * <span style="text-decoration:underline">@author</span> Naoki Sawada</div>
</div></div>
<div style="position:absolute;left:743px;top:160px;width:66px;height:11px;background:#2b2d2f;border-radius:2px"></div>
<svg style="position:absolute;left:746.5px;top:161.5px" width="8" height="7"><path d="M3.6 0.2 L7.2 6.6 H0 Z" fill="#e0a31f"/><path d="M3.6 2.3 V4.4 M3.6 5.2 V5.9" stroke="#2b2d2f" stroke-width="0.8"/></svg>
<div style="position:absolute;left:755.3px;top:161.47px;white-space:pre;font-family:'Liberation Sans',sans-serif;font-size:7px;line-height:7.819px;color:#b8bbbe;font-weight:normal;">19</div>
<svg style="position:absolute;left:766.3px;top:161.5px" width="8" height="7"><path d="M3.4 0.2 L6.8 6.6 H0 Z" fill="#807d70"/><path d="M3.4 2.3 V4.4 M3.4 5.2 V5.9" stroke="#2b2d2f" stroke-width="0.8"/></svg>
<div style="position:absolute;left:774.2px;top:161.47px;white-space:pre;font-family:'Liberation Sans',sans-serif;font-size:7px;line-height:7.819px;color:#b8bbbe;font-weight:normal;">255</div>
<svg style="position:absolute;left:789.5px;top:161.5px" width="8" height="8"><path d="M0.4 2.8 L3 5.4 L6.6 0.9" stroke="#3b9d4a" stroke-width="1.1" fill="none"/><path d="M0.8 6.9 L3 5.2 L5.4 7" stroke="#3b9d4a" stroke-width="0.8" fill="none"/></svg>
<div style="position:absolute;left:797.6px;top:161.47px;white-space:pre;font-family:'Liberation Sans',sans-serif;font-size:7px;line-height:7.819px;color:#b8bbbe;font-weight:normal;">384</div>
<div id="hthumb"></div>
<div style="position:absolute;left:0;top:660px;width:809px;height:13px;background:#36383a"></div>
<div style="position:absolute;left:11.3px;top:663.63px;white-space:pre;font-family:'Liberation Sans',sans-serif;font-size:6.6px;line-height:7.372px;color:#bcbec0;font-weight:normal;transform:scaleX(1.0307);transform-origin:0 0;">elFinderVolumeDriver</div>
<svg style="position:absolute;left:82px;top:664.5px" width="4" height="6"><path d="M0.6 0.5 L3 3 L0.6 5.5" stroke="#75787a" stroke-width="0.7" fill="none"/></svg>
<div style="position:absolute;left:89.4px;top:663.63px;white-space:pre;font-family:'Liberation Sans',sans-serif;font-size:6.6px;line-height:7.372px;color:#bcbec0;font-weight:normal;transform:scaleX(1.0446);transform-origin:0 0;">stat()</div>
<svg style="position:absolute;left:695.5px;top:659.5px" width="22" height="8" viewBox="0 0 22 8"><path d="M3.5 0.3 V1.3 M0.5 2.7 V1.5 H6.5 V2.7 M0.3 4.3 H6.7 M2.8 2.5 L1.5 5 Q4 6 6 7.6 M4.8 3.8 Q4 6.5 0.7 7.6" stroke="#dcdcdc" stroke-width="0.7" fill="none"/><path d="M10.5 0.3 L7.4 3.3 M10.5 0.3 L13.6 3.3 M8.6 3.6 H12.4 M8.2 5.4 H12.8 M7.6 7.4 H13.4 M10.5 3.6 V7.4" stroke="#dcdcdc" stroke-width="0.7" fill="none"/><path d="M17.5 0.2 V1.1 M14.6 2.5 V1.3 H20.4 V2.5 M16.6 2 L15 4 M16.4 2.7 H19.2 Q18 4.5 15 5 M17 3.5 Q18.5 4.5 20.4 4.8 M15.8 5.4 H19.3 V7.7 H15.8 Z" stroke="#dcdcdc" stroke-width="0.7" fill="none"/></svg>
<div style="position:absolute;left:718.9px;top:659.81px;white-space:pre;font-family:'Liberation Sans',sans-serif;font-size:7.5px;line-height:8.377px;color:#dcdcdc;font-weight:normal;">(</div>
<div style="position:absolute;left:724.3px;top:659.36px;white-space:pre;font-family:'Liberation Sans',sans-serif;font-size:8px;line-height:8.936px;color:#dcdcdc;font-weight:normal;transform:scaleX(0.9973);transform-origin:0 0;">www.anquanke.com</div>
<div style="position:absolute;left:797.8px;top:659.81px;white-space:pre;font-family:'Liberation Sans',sans-serif;font-size:7.5px;line-height:8.377px;color:#dcdcdc;font-weight:normal;">)</div>
<svg style="position:absolute;left:0;top:0;pointer-events:none" width="809" height="803"><defs><symbol id="wm" overflow="visible"><path transform="translate(0.0 0)" d="M1.8 0.8 H10.2 M6 0.8 V4.8 M1 2.1 H11 V3.6 M1 2.1 V4 M2.8 3 L4.2 3.5 M2.8 4.3 L4.2 4.8 M7.8 3 L9.2 3.5 M7.8 4.3 L9.2 4.8 M6 5.4 L0.8 8.4 M6 5.4 L11.2 8.4 M4.4 7.6 H7.6 M3.2 9.1 H8.6 L6.2 11.8"/><path transform="translate(12.8 0)" d="M4 0.6 L1.4 4 L4 4.2 L1 8 L4.5 7.4 M1 10.5 L4.8 9.2 M6.2 1.2 H10.2 V11 M6.2 1.2 V11 M6.2 4.6 H10.2 M6.2 7.8 H10.2 M5 11 H11.6"/><path transform="translate(25.6 0)" d="M1.4 1.2 L2.8 2.4 M1.2 4.6 L3 3.4 M6.4 0.4 L5 2.6 M5.6 1.6 H10.6 L9.6 3 M8 1.6 L6 4.6 M8 2.6 L10.8 4.6 M3 5.6 H9 V9.2 H3 Z M6 6.6 V9 M5.8 9.4 L2.6 11.6 M6.4 9.4 L9.6 11.6"/><path transform="translate(38.4 0)" d="M1.2 1.2 L2.2 3 M4.8 1 L3.8 3 M0.6 4.2 H5.4 M3 0.4 V11.6 M3 4.6 L0.6 8.6 M3 4.6 L5.6 7.4 M7.2 1.6 L8.2 2.6 M7 4 L8 5 M6 7.6 L11.6 6.6 M9.6 0.4 V11.6"/><path transform="translate(51.2 0)" d="M6 0.4 V1.8 M1 2.6 H11 M3.4 3.4 Q5.6 9 11 11.4 M8.6 3.4 Q6.6 9 1 11.4"/><path transform="translate(64.0 0)" d="M6 0.4 V1.6 M1.6 1.8 H11.2 M1.6 1.8 V7 Q1.4 10 0.4 11.6 M4.4 3.6 H10.2 M6.4 2.6 L4.4 6.8 H10.2 M7.8 4.4 V11.6 M3.4 8.8 H11.2"/></symbol><clipPath id="wmc"><rect x="0" y="130" width="809" height="543"/></clipPath></defs><g clip-path="url(#wmc)" fill="none" stroke="#3d6b47" stroke-width="0.85" opacity="0.25"><use href="#wm" transform="translate(811.7 110.2) rotate(-30) translate(-6 -6)"/><use href="#wm" transform="translate(374.0 112.8) rotate(-30) translate(-6 -6)"/><use href="#wm" transform="translate(442.8 123.2) rotate(-30) translate(-6 -6)"/><use href="#wm" transform="translate(511.6 133.6) rotate(-30) translate(-6 -6)"/><use href="#wm" transform="translate(580.4 144.0) rotate(-30) translate(-6 -6)"/><use href="#wm" transform="translate(649.2 154.4) rotate(-30) translate(-6 -6)"/><use href="#wm" transform="translate(718.0 164.8) rotate(-30) translate(-6 -6)"/><use href="#wm" transform="translate(786.8 175.2) rotate(-30) translate(-6 -6)"/><use href="#wm" transform="translate(-63.7 115.4) rotate(-30) translate(-6 -6)"/><use href="#wm" transform="translate(5.1 125.8) rotate(-30) translate(-6 -6)"/><use href="#wm" transform="translate(73.9 136.2) rotate(-30) translate(-6 -6)"/><use href="#wm" transform="translate(142.7 146.6) rotate(-30) translate(-6 -6)"/><use href="#wm" transform="translate(211.5 157.0) rotate(-30) translate(-6 -6)"/><use href="#wm" transform="translate(280.3 167.4) rotate(-30) translate(-6 -6)"/><use href="#wm" transform="translate(349.1 177.8) rotate(-30) translate(-6 -6)"/><use href="#wm" transform="translate(417.9 188.2) rotate(-30) translate(-6 -6)"/><use href="#wm" transform="translate(486.7 198.6) rotate(-30) translate(-6 -6)"/><use href="#wm" transform="translate(555.5 209.0) rotate(-30) translate(-6 -6)"/><use href="#wm" transform="translate(624.3 219.4) rotate(-30) translate(-6 -6)"/><use href="#wm" transform="translate(693.1 229.8) rotate(-30) translate(-6 -6)"/><use href="#wm" transform="translate(761.9 240.2) rotate(-30) translate(-6 -6)"/><use href="#wm" transform="translate(-19.8 190.8) rotate(-30) translate(-6 -6)"/><use href="#wm" transform="translate(49.0 201.2) rotate(-30) translate(-6 -6)"/><use href="#wm" transform="translate(117.8 211.6) rotate(-30) translate(-6 -6)"/><use href="#wm" transform="translate(186.6 222.0) rotate(-30) translate(-6 -6)"/><use href="#wm" transform="translate(255.4 232.4) rotate(-30) translate(-6 -6)"/><use href="#wm" transform="translate(324.2 242.8) rotate(-30) translate(-6 -6)"/><use href="#wm" transform="translate(393.0 253.2) rotate(-30) translate(-6 -6)"/><use href="#wm" transform="translate(461.8 263.6) rotate(-30) translate(-6 -6)"/><use href="#wm" transform="translate(530.6 274.0) rotate(-30) translate(-6 -6)"/><use href="#wm" transform="translate(599.4 284.4) rotate(-30) translate(-6 -6)"/><use href="#wm" transform="translate(668.2 294.8) rotate(-30) translate(-6 -6)"/><use href="#wm" transform="translate(737.0 305.2) rotate(-30) translate(-6 -6)"/><use href="#wm" transform="translate(805.8 315.6) rotate(-30) translate(-6 -6)"/><use href="#wm" transform="translate(-44.7 255.8) rotate(-30) translate(-6 -6)"/><use href="#wm" transform="translate(24.1 266.2) rotate(-30) translate(-6 -6)"/><use href="#wm" transform="translate(92.9 276.6) rotate(-30) translate(-6 -6)"/><use href="#wm" transform="translate(161.7 287.0) rotate(-30) translate(-6 -6)"/><use href="#wm" transform="translate(230.5 297.4) rotate(-30) translate(-6 -6)"/><use href="#wm" transform="translate(299.3 307.8) rotate(-30) translate(-6 -6)"/><use href="#wm" transform="translate(368.1 318.2) rotate(-30) translate(-6 -6)"/><use href="#wm" transform="translate(436.9 328.6) rotate(-30) translate(-6 -6)"/><use href="#wm" transform="translate(505.7 339.0) rotate(-30) translate(-6 -6)"/><use href="#wm" transform="translate(574.5 349.4) rotate(-30) translate(-6 -6)"/><use href="#wm" transform="translate(643.3 359.8) rotate(-30) translate(-6 -6)"/><use href="#wm" transform="translate(712.1 370.2) rotate(-30) translate(-6 -6)"/><use href="#wm" transform="translate(780.9 380.6) rotate(-30) translate(-6 -6)"/><use href="#wm" transform="translate(-69.6 320.8) rotate(-30) translate(-6 -6)"/><use href="#wm" transform="translate(-0.8 331.2) rotate(-30) translate(-6 -6)"/><use href="#wm" transform="translate(68.0 341.6) rotate(-30) translate(-6 -6)"/><use href="#wm" transform="translate(136.8 352.0) rotate(-30) translate(-6 -6)"/><use href="#wm" transform="translate(205.6 362.4) rotate(-30) translate(-6 -6)"/><use href="#wm" transform="translate(274.4 372.8) rotate(-30) translate(-6 -6)"/><use href="#wm" transform="translate(343.2 383.2) rotate(-30) translate(-6 -6)"/><use href="#wm" transform="translate(412.0 393.6) rotate(-30) translate(-6 -6)"/><use href="#wm" transform="translate(480.8 404.0) rotate(-30) translate(-6 -6)"/><use href="#wm" transform="translate(549.6 414.4) rotate(-30) translate(-6 -6)"/><use href="#wm" transform="translate(618.4 424.8) rotate(-30) translate(-6 -6)"/><use href="#wm" transform="translate(687.2 435.2) rotate(-30) translate(-6 -6)"/><use href="#wm" transform="translate(756.0 445.6) rotate(-30) translate(-6 -6)"/><use href="#wm" transform="translate(-25.7 396.2) rotate(-30) translate(-6 -6)"/><use href="#wm" transform="translate(43.1 406.6) rotate(-30) translate(-6 -6)"/><use href="#wm" transform="translate(111.9 417.0) rotate(-30) translate(-6 -6)"/><use href="#wm" transform="translate(180.7 427.4) rotate(-30) translate(-6 -6)"/><use href="#wm" transform="translate(249.5 437.8) rotate(-30) translate(-6 -6)"/><use href="#wm" transform="translate(318.3 448.2) rotate(-30) translate(-6 -6)"/><use href="#wm" transform="translate(387.1 458.6) rotate(-30) translate(-6 -6)"/><use href="#wm" transform="translate(455.9 469.0) rotate(-30) translate(-6 -6)"/><use href="#wm" transform="translate(524.7 479.4) rotate(-30) translate(-6 -6)"/><use href="#wm" transform="translate(593.5 489.8) rotate(-30) translate(-6 -6)"/><use href="#wm" transform="translate(662.3 500.2) rotate(-30) translate(-6 -6)"/><use href="#wm" transform="translate(731.1 510.6) rotate(-30) translate(-6 -6)"/><use href="#wm" transform="translate(799.9 521.0) rotate(-30) translate(-6 -6)"/><use href="#wm" transform="translate(-50.6 461.2) rotate(-30) translate(-6 -6)"/><use href="#wm" transform="translate(18.2 471.6) rotate(-30) translate(-6 -6)"/><use href="#wm" transform="translate(87.0 482.0) rotate(-30) translate(-6 -6)"/><use href="#wm" transform="translate(155.8 492.4) rotate(-30) translate(-6 -6)"/><use href="#wm" transform="translate(224.6 502.8) rotate(-30) translate(-6 -6)"/><use href="#wm" transform="translate(293.4 513.2) rotate(-30) translate(-6 -6)"/><use href="#wm" transform="translate(362.2 523.6) rotate(-30) translate(-6 -6)"/><use href="#wm" transform="translate(431.0 534.0) rotate(-30) translate(-6 -6)"/><use href="#wm" transform="translate(499.8 544.4) rotate(-30) translate(-6 -6)"/><use href="#wm" transform="translate(568.6 554.8) rotate(-30) translate(-6 -6)"/><use href="#wm" transform="translate(637.4 565.2) rotate(-30) translate(-6 -6)"/><use href="#wm" transform="translate(706.2 575.6) rotate(-30) translate(-6 -6)"/><use href="#wm" transform="translate(775.0 586.0) rotate(-30) translate(-6 -6)"/><use href="#wm" transform="translate(-75.5 526.2) rotate(-30) translate(-6 -6)"/><use href="#wm" transform="translate(-6.7 536.6) rotate(-30) translate(-6 -6)"/><use href="#wm" transform="translate(62.1 547.0) rotate(-30) translate(-6 -6)"/><use href="#wm" transform="translate(130.9 557.4) rotate(-30) translate(-6 -6)"/><use href="#wm" transform="translate(199.7 567.8) rotate(-30) translate(-6 -6)"/><use href="#wm" transform="translate(268.5 578.2) rotate(-30) translate(-6 -6)"/><use href="#wm" transform="translate(337.3 588.6) rotate(-30) translate(-6 -6)"/><use href="#wm" transform="translate(406.1 599.0) rotate(-30) translate(-6 -6)"/><use href="#wm" transform="translate(474.9 609.4) rotate(-30) translate(-6 -6)"/><use href="#wm" transform="translate(543.7 619.8) rotate(-30) translate(-6 -6)"/><use href="#wm" transform="translate(612.5 630.2) rotate(-30) translate(-6 -6)"/><use href="#wm" transform="translate(681.3 640.6) rotate(-30) translate(-6 -6)"/><use href="#wm" transform="translate(750.1 651.0) rotate(-30) translate(-6 -6)"/><use href="#wm" transform="translate(818.9 661.4) rotate(-30) translate(-6 -6)"/><use href="#wm" transform="translate(-31.6 601.6) rotate(-30) translate(-6 -6)"/><use href="#wm" transform="translate(37.2 612.0) rotate(-30) translate(-6 -6)"/><use href="#wm" transform="translate(106.0 622.4) rotate(-30) translate(-6 -6)"/><use href="#wm" transform="translate(174.8 632.8) rotate(-30) translate(-6 -6)"/><use href="#wm" transform="translate(243.6 643.2) rotate(-30) translate(-6 -6)"/><use href="#wm" transform="translate(312.4 653.6) rotate(-30) translate(-6 -6)"/><use href="#wm" transform="translate(381.2 664.0) rotate(-30) translate(-6 -6)"/><use href="#wm" transform="translate(450.0 674.4) rotate(-30) translate(-6 -6)"/><use href="#wm" transform="translate(518.8 684.8) rotate(-30) translate(-6 -6)"/><use href="#wm" transform="translate(587.6 695.2) rotate(-30) translate(-6 -6)"/><use href="#wm" transform="translate(656.4 705.6) rotate(-30) translate(-6 -6)"/><use href="#wm" transform="translate(725.2 716.0) rotate(-30) translate(-6 -6)"/><use href="#wm" transform="translate(-56.5 666.6) rotate(-30) translate(-6 -6)"/><use href="#wm" transform="translate(12.3 677.0) rotate(-30) translate(-6 -6)"/><use href="#wm" transform="translate(81.1 687.4) rotate(-30) translate(-6 -6)"/><use href="#wm" transform="translate(149.9 697.8) rotate(-30) translate(-6 -6)"/><use href="#wm" transform="translate(218.7 708.2) rotate(-30) translate(-6 -6)"/></g></svg>
</body></html>
